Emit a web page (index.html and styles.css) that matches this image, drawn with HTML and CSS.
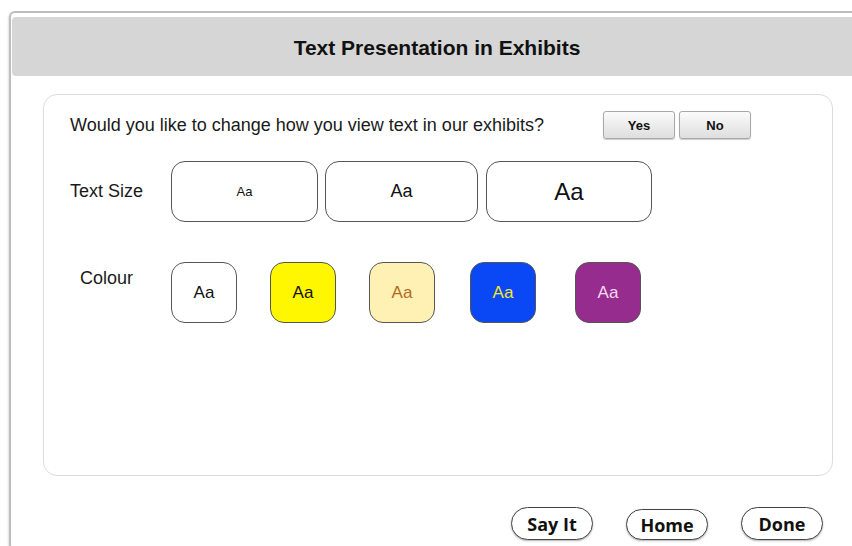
FILE: index.html
```html
<!DOCTYPE html>
<html lang="en">
<head>
<meta charset="utf-8">
<title>Text Presentation in Exhibits</title>
<link rel="stylesheet" href="styles.css">
</head>
<body>
<div class="window">
  <header class="titlebar">
    <h1 class="title">Text Presentation in Exhibits</h1>
  </header>

  <section class="panel">
    <div class="row row-question">
      <p class="question">Would you like to change how you view text in our exhibits?</p>
      <div class="choice">
        <button class="choice-btn">Yes</button>
        <button class="choice-btn">No</button>
      </div>
    </div>

    <div class="row row-size">
      <span class="label">Text Size</span>
      <div class="sizes">
        <button class="size size-s">Aa</button>
        <button class="size size-m">Aa</button>
        <button class="size size-l">Aa</button>
      </div>
    </div>

    <div class="row row-colour">
      <span class="label label-colour">Colour</span>
      <div class="swatches">
        <button class="swatch swatch-white">Aa</button>
        <button class="swatch swatch-yellow">Aa</button>
        <button class="swatch swatch-cream">Aa</button>
        <button class="swatch swatch-blue">Aa</button>
        <button class="swatch swatch-purple">Aa</button>
      </div>
    </div>
  </section>

  <footer class="actions">
    <button class="pill">Say It</button>
    <button class="pill pill-home">Home</button>
    <button class="pill">Done</button>
  </footer>
</div>
</body>
</html>
```

FILE: styles.css
```css
html, body {
  margin: 0;
  padding: 0;
  background: #ffffff;
  overflow: hidden;
}

body {
  font-family: "Liberation Sans", Arial, sans-serif;
  color: #111;
}

button {
  font-family: inherit;
  cursor: pointer;
}

/* outer window frame, running off the right edge */
.window {
  margin: 11px 0 0 9px;
  width: 870px;
  height: 540px;
  box-sizing: border-box;
  border: 2px solid #bdbdbd;
  border-right: none;
  border-radius: 6px 0 0 6px;
  padding: 4px 0 0 1px;
  box-shadow: -1px 1px 2px rgba(0, 0, 0, 0.12);
}

.titlebar {
  width: 850px;
  height: 59px;
  box-sizing: border-box;
  padding-top: 2px;
  background: #d6d6d6;
  border-radius: 4px 0 0 4px;
  display: flex;
  align-items: center;
  justify-content: center;
}

.title {
  margin: 0;
  font-size: 21px;
  font-weight: bold;
  color: #111;
}

/* main settings card */
.panel {
  margin: 18px 0 0 31px;
  width: 790px;
  height: 382px;
  box-sizing: border-box;
  border: 1px solid #dcdcdc;
  border-radius: 14px;
  padding: 16px 0 0 26px;
}

.row {
  display: flex;
}

.row-question {
  align-items: center;
  height: 28px;
}

.question {
  margin: 0;
  width: 533px;
  font-size: 18px;
  color: #1a1a1a;
}

.choice {
  display: flex;
  gap: 4px;
}

.choice-btn {
  width: 72px;
  height: 28px;
  border: 1px solid #a8a8a8;
  border-radius: 3px;
  background: linear-gradient(#fbfbfb, #dedede);
  box-shadow: 0 1px 1px rgba(0, 0, 0, 0.2);
  font-size: 13px;
  font-weight: bold;
  color: #111;
  padding: 0;
}

.label {
  width: 101px;
  font-size: 18px;
  color: #1a1a1a;
}

.row-size {
  margin-top: 22px;
  align-items: center;
}

.sizes {
  display: flex;
  gap: 7px;
}

.size {
  height: 61px;
  border: 1.5px solid #555;
  border-radius: 14px;
  background: #fff;
  color: #111;
  padding: 0;
}

.size-s { width: 147px; font-size: 13px; }
.size-m { width: 153px; font-size: 18px; margin-right: 1px; }
.size-l { width: 166px; font-size: 24px; }

.row-colour {
  margin-top: 40px;
  align-items: flex-start;
}

.label-colour {
  padding: 6px 0 0 10px;
  width: 91px;
}

.swatches {
  display: flex;
  gap: 33px;
}

.swatch {
  width: 66px;
  height: 61px;
  border: 1.5px solid #555;
  border-radius: 14px;
  font-size: 17px;
  padding: 0;
}

.swatch-white  { background: #ffffff; color: #111; }
.swatch-yellow { background: #fff700; color: #111; }
.swatch-cream  { background: #fff0b4; color: #b26a22; }
.swatch-blue   { background: #0a48f6; color: #f4e42a; margin-left: 2px; }
.swatch-purple { background: #962d8e; color: #f6d8f0; margin-left: 6px; }

/* bottom navigation */
.actions {
  margin: 31px 0 0 31px;
  width: 790px;
  padding-right: 10px;
  box-sizing: border-box;
  display: flex;
  justify-content: flex-end;
  align-items: flex-start;
  gap: 33px;
}

.pill {
  width: 82px;
  height: 33px;
  border: 1.5px solid #444;
  border-radius: 17px;
  background: #fff;
  box-shadow: 0 1px 2px rgba(0, 0, 0, 0.3);
  font-family: "Open Sans", "Noto Sans", sans-serif;
  font-weight: bold;
  font-size: 18px;
  color: #111;
  padding: 0;
}

.pill-home {
  margin-top: 2px;
  height: 31px;
}
```
